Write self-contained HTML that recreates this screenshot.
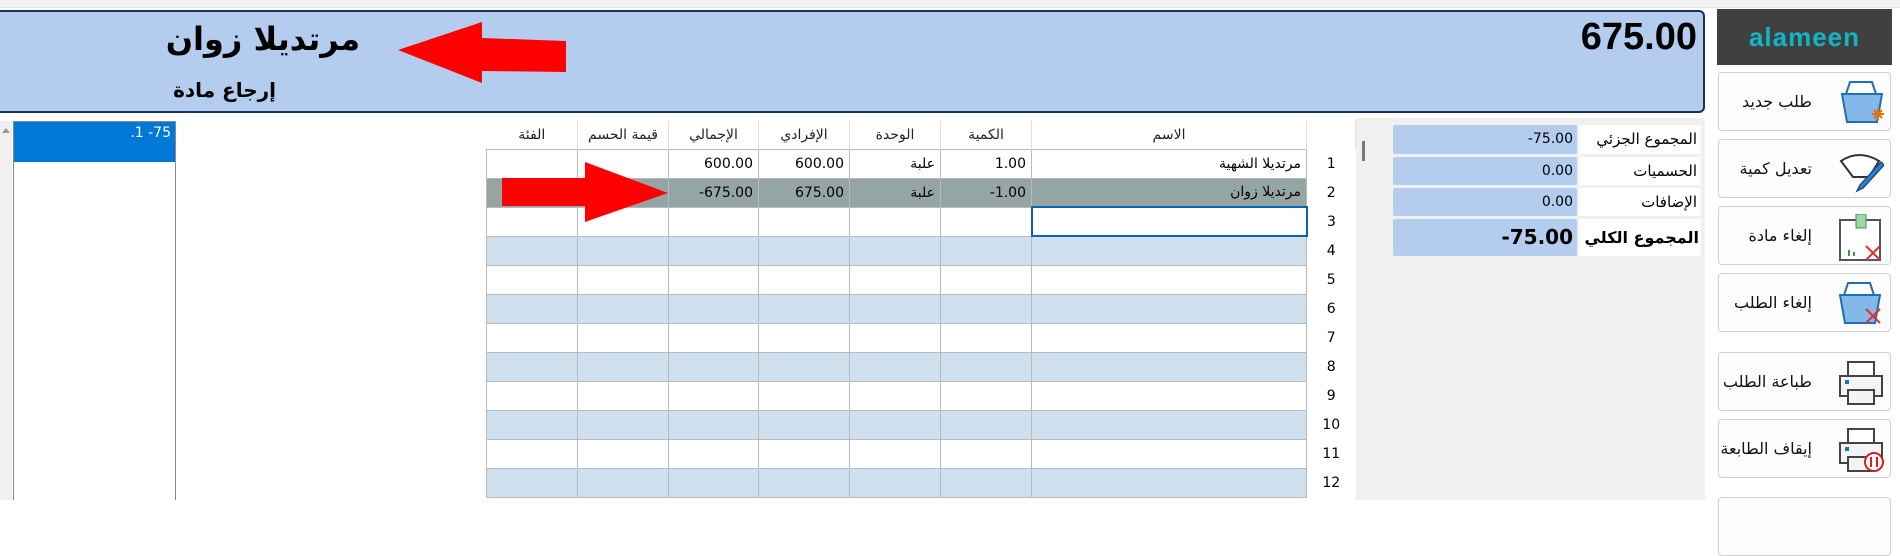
<!DOCTYPE html>
<html><head><meta charset="utf-8"><style>
*{margin:0;padding:0;box-sizing:border-box}
body{width:1900px;height:500px;overflow:hidden;background:#fff;font-family:"DejaVu Sans","Liberation Sans",sans-serif;position:relative}
.abs{position:absolute;white-space:nowrap}
.top{left:0;top:0;width:1900px;height:8px;background:#f4f4f4;border-bottom:1px solid #e4e4e4}
.banner{left:0;top:10px;width:1705px;height:103px;background:#b4cdee;border:2px solid #12335c;border-left:none;border-radius:0 6px 6px 0}
.logo{left:1717px;top:9px;width:175px;height:56px;background:#404040;color:#14b4c8;font:bold 26px "Liberation Sans",sans-serif;text-align:center;line-height:56px;letter-spacing:1px}
.btn{left:1718px;width:173px;height:59px;background:#fdfdfd;border:1px solid #cfcfcf;border-radius:4px}
.btn span{position:absolute;right:78px;top:0;line-height:57px;font-size:16px;color:#111;white-space:nowrap}
.btn svg{position:absolute;right:6px;top:7px}
.panel{left:1390px;top:118px;width:315px;height:382px;background:#f0f0f0}
.lab{left:1579px;width:122px;background:#fff;text-align:right;padding-right:4px;font-size:15px;overflow:hidden}
.val{left:1393px;width:184px;background:#b4cdee;text-align:right;padding-right:4px;font-size:14px;border-radius:2px}
table{position:absolute;left:486px;top:121px;border-collapse:collapse;font-size:14px;table-layout:fixed}
td{border:1px solid #b9b9b9;height:29px;text-align:right;padding-right:5px;overflow:hidden;white-space:nowrap}
td.n{border:none;text-align:center;padding:0;background:#fff}
tr.h td{border:none;border-right:1px solid #e0e0e0;text-align:center;padding:0;height:28px;color:#222;font-size:14px}
tr.b td{background:#cfe0ee}
tr.b td.n,tr.s td.n{background:#fff}
tr.s td{background:#95a5a3}
</style></head><body>
<div class="abs top"></div>
<div class="abs banner"></div>
<div class="abs" style="right:1540px;top:20px;font-size:32px;font-weight:bold;direction:rtl">مرتديلا زوان</div>
<div class="abs" style="right:1624px;top:78px;font-size:20px;font-weight:bold;direction:rtl">إرجاع مادة</div>
<svg class="abs" style="left:395px;top:20px" width="175" height="66"><polygon points="3,30 87,2 87,18 171,21 171,52 87,51 87,63" fill="#ff0000"/></svg>
<div class="abs" style="left:1480px;top:16px;width:217px;text-align:right;font:bold 38px 'Liberation Sans',sans-serif">675.00</div>
<div class="abs logo">alameen</div>

<div class="abs btn" style="top:72px"><span>طلب جديد</span><svg width="44" height="46"><path d="M10 2h22l4 12H6z" fill="none" stroke="#1f6fb5" stroke-width="2"/><path d="M2 14h40l-5 28H7z" fill="#84b8e8" stroke="#1f6fb5" stroke-width="2"/><path d="M34 30l8 8M42 30l-8 8M38 28v12M32 34h12" stroke="#e07010" stroke-width="2"/></svg></div>
<div class="abs btn" style="top:139px"><span>تعديل كمية</span><svg width="46" height="46"><path d="M3 14q18-12 38 0l-10 16h-16z" fill="#fff" stroke="#333" stroke-width="2"/><path d="M43 15L22 38l-3 6 6-3 21-23z" fill="#2f80d0" stroke="#1a4f8a" stroke-width="1.5"/></svg></div>
<div class="abs btn" style="top:206px"><span>إلغاء مادة</span><svg width="46" height="48"><rect x="2" y="6" width="40" height="40" fill="#fff" stroke="#555" stroke-width="2"/><rect x="18" y="0" width="10" height="14" fill="#9fd6a6" stroke="#3a9a48"/><rect x="10" y="36" width="2" height="6" fill="#3a9a48"/><rect x="15" y="38" width="2" height="4" fill="#3a9a48"/><path d="M28 32l14 14M42 32l-14 14" stroke="#e03030" stroke-width="2"/></svg></div>
<div class="abs btn" style="top:273px"><span>إلغاء الطلب</span><svg width="46" height="46"><path d="M10 2h22l4 12H6z" fill="none" stroke="#1f6fb5" stroke-width="2"/><path d="M2 14h40l-5 28H7z" fill="#84b8e8" stroke="#1f6fb5" stroke-width="2"/><path d="M28 28l14 14M42 28l-14 14" stroke="#e03030" stroke-width="2"/></svg></div>
<div class="abs btn" style="top:352px"><span>طباعة الطلب</span><svg width="46" height="46"><rect x="10" y="2" width="26" height="14" fill="#fff" stroke="#444" stroke-width="2"/><rect x="2" y="16" width="42" height="20" fill="#f4f4f4" stroke="#444" stroke-width="2"/><rect x="10" y="30" width="26" height="14" fill="#f4f4f4" stroke="#444" stroke-width="2"/><rect x="7" y="20" width="4" height="4" fill="#1f6fb5"/></svg></div>
<div class="abs btn" style="top:419px"><span>إيقاف الطابعة</span><svg width="46" height="46"><rect x="10" y="2" width="26" height="14" fill="#fff" stroke="#444" stroke-width="2"/><rect x="2" y="16" width="42" height="20" fill="#f4f4f4" stroke="#444" stroke-width="2"/><rect x="10" y="30" width="26" height="14" fill="#f4f4f4" stroke="#444" stroke-width="2"/><rect x="7" y="20" width="4" height="4" fill="#1f6fb5"/><circle cx="36" cy="35" r="9" fill="#fff" stroke="#d02020" stroke-width="2"/><path d="M33 30v10M39 30v10" stroke="#d02020" stroke-width="2"/></svg></div>
<div class="abs btn" style="top:497px"></div>

<div class="abs panel"></div>
<div class="abs lab" style="top:125px;height:29px;line-height:29px">المجموع الجزئي</div>
<div class="abs val" style="top:125px;height:29px;line-height:29px">-75.00</div>
<div class="abs lab" style="top:157px;height:28px;line-height:28px">الحسميات</div>
<div class="abs val" style="top:157px;height:28px;line-height:28px">0.00</div>
<div class="abs lab" style="top:188px;height:28px;line-height:28px">الإضافات</div>
<div class="abs val" style="top:188px;height:28px;line-height:28px">0.00</div>
<div class="abs lab" style="top:219px;height:37px;line-height:37px;font-size:16px;font-weight:bold;padding-right:2px">المجموع الكلي</div>
<div class="abs val" style="top:219px;height:37px;line-height:37px;font-size:20px;font-weight:bold">-75.00</div>

<div class="abs" style="left:1355px;top:118px;width:35px;height:382px;background:#f0f0f0"></div>
<div class="abs" style="left:1362px;top:141px;width:3px;height:20px;background:#777"></div>

<div class="abs" style="left:13px;top:121px;width:163px;height:379px;border:1px solid #888;border-bottom:none;background:#fff"></div>
<div class="abs" style="left:14px;top:122px;width:161px;height:40px;background:#0078d7;color:#fff;font-size:14px;text-align:right;padding:3px 4px 0 0">.1 -75</div>
<div class="abs" style="left:0;top:121px;width:12px;height:379px;background:#f0f0f0"></div>
<div class="abs" style="left:2px;top:128px;width:0;height:0;border-left:4px solid transparent;border-right:4px solid transparent;border-bottom:5px solid #999"></div>

<table>
<colgroup><col style="width:91px"><col style="width:91px"><col style="width:90px"><col style="width:91px"><col style="width:91px"><col style="width:91px"><col style="width:275px"><col style="width:49px"></colgroup>
<tr class="h"><td>الفئة</td><td>قيمة الحسم</td><td>الإجمالي</td><td>الإفرادي</td><td>الوحدة</td><td>الكمية</td><td>الاسم</td><td class="n"></td></tr>
<tr><td></td><td></td><td>600.00</td><td>600.00</td><td>علبة</td><td>1.00</td><td>مرتديلا الشهية</td><td class="n">1</td></tr>
<tr class="s"><td></td><td></td><td>-675.00</td><td>675.00</td><td>علبة</td><td>-1.00</td><td>مرتديلا زوان</td><td class="n">2</td></tr>
<tr><td></td><td></td><td></td><td></td><td></td><td></td><td style="border:2px solid #0a64b4"></td><td class="n">3</td></tr>
<tr class="b"><td></td><td></td><td></td><td></td><td></td><td></td><td></td><td class="n">4</td></tr>
<tr><td></td><td></td><td></td><td></td><td></td><td></td><td></td><td class="n">5</td></tr>
<tr class="b"><td></td><td></td><td></td><td></td><td></td><td></td><td></td><td class="n">6</td></tr>
<tr><td></td><td></td><td></td><td></td><td></td><td></td><td></td><td class="n">7</td></tr>
<tr class="b"><td></td><td></td><td></td><td></td><td></td><td></td><td></td><td class="n">8</td></tr>
<tr><td></td><td></td><td></td><td></td><td></td><td></td><td></td><td class="n">9</td></tr>
<tr class="b"><td></td><td></td><td></td><td></td><td></td><td></td><td></td><td class="n">10</td></tr>
<tr><td></td><td></td><td></td><td></td><td></td><td></td><td></td><td class="n">11</td></tr>
<tr class="b"><td></td><td></td><td></td><td></td><td></td><td></td><td></td><td class="n">12</td></tr>
</table>
<svg class="abs" style="left:500px;top:160px" width="172" height="64"><polygon points="2,18 85,18 85,2 168,33 85,62 85,46 2,46" fill="#ff0000"/></svg>
</body></html>
